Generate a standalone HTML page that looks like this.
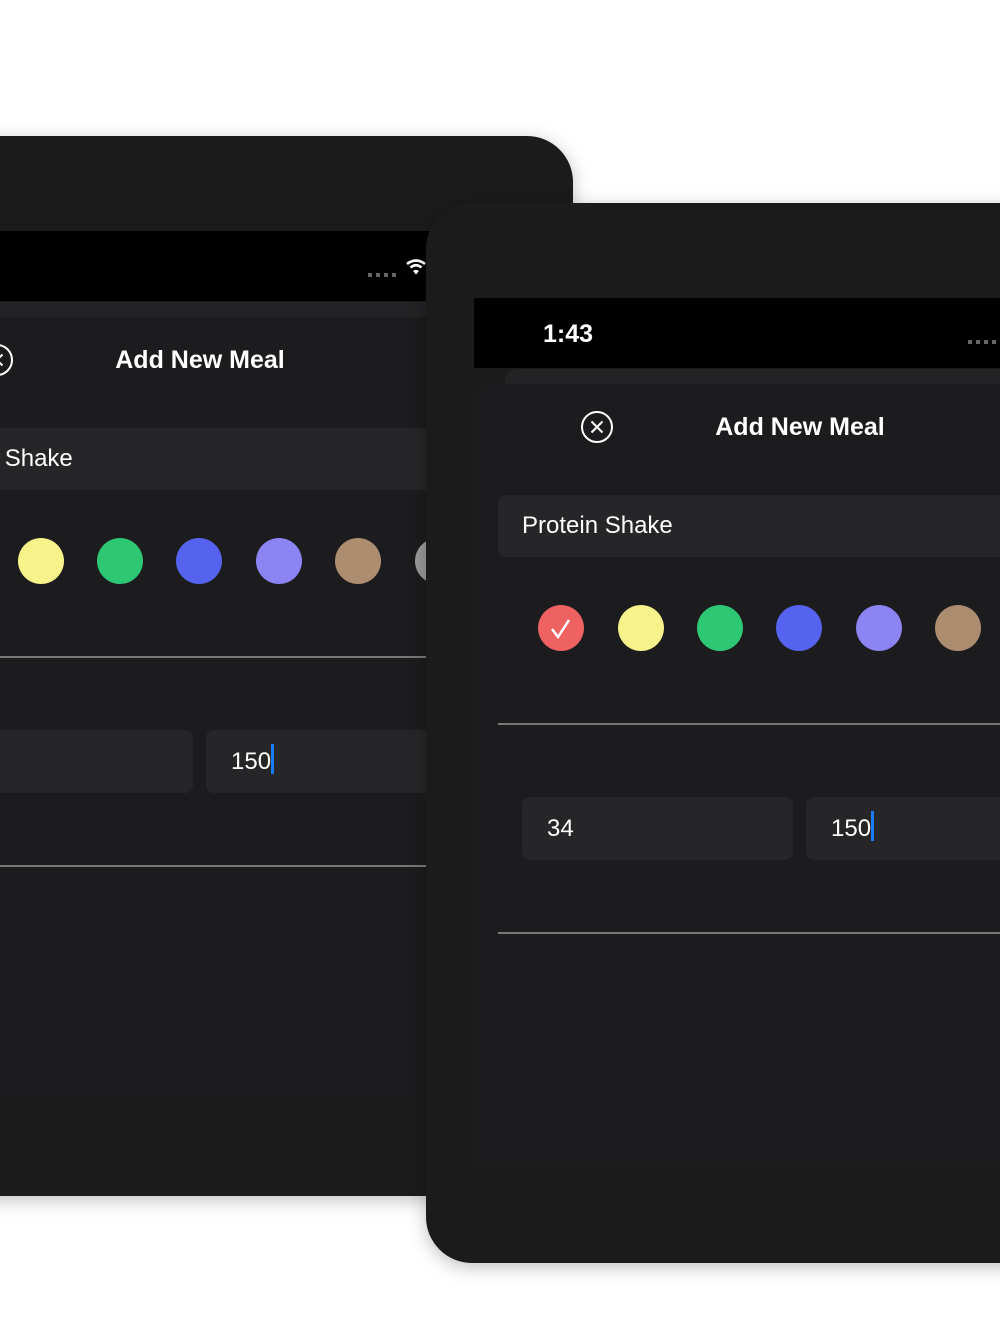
<!DOCTYPE html>
<html><head><meta charset="utf-8"><style>
html,body{margin:0;padding:0;background:#fff;width:1000px;height:1334px;overflow:hidden;font-family:"Liberation Sans",sans-serif}
#wrap{position:relative;width:1000px;height:1334px;overflow:hidden}
.dev{position:absolute;width:747px;height:1060px;background:#1b1b1b;border-radius:46px;box-shadow:0 4px 18px rgba(0,0,0,.25);overflow:hidden}
.sb{position:absolute;left:48px;top:95px;width:651px;height:70px;background:#000}
.time{position:absolute;left:117px;top:117px;color:#fff;font-size:25px;font-weight:bold}
.dots{position:absolute;left:542px;top:137px;width:30px;height:4px;background:repeating-linear-gradient(90deg,#666 0 4px,transparent 4px 8px)}
.card2{position:absolute;left:79px;top:166px;width:700px;height:40px;background:#232325;border-radius:12px}
.sheet{position:absolute;left:48px;top:181px;width:651px;height:782px;background:#1c1c1e;border-radius:12px 12px 0 0}
.title{position:absolute;left:174px;width:400px;top:209px;text-align:center;color:#fff;font-size:25px;font-weight:bold;line-height:30px}
.close{position:absolute;left:153px;top:207px}
.field{position:absolute;left:72px;top:292px;width:620px;height:62px;background:#262628;border-radius:8px;color:#fff;font-size:24px;line-height:62px;padding-left:24px;box-sizing:border-box}
.c{position:absolute;top:402px;width:46px;height:46px;border-radius:50%}
.line{position:absolute;left:72px;width:640px;height:2px;background:#777}
.inp{position:absolute;top:594px;height:63px;background:#262628;border-radius:8px;color:#fff;font-size:24px;line-height:63px;padding-left:25px;box-sizing:border-box}
.caret{display:inline-block;width:3px;height:30px;background:#1a7cf5;vertical-align:-5px}
</style></head><body><div id="wrap">

<div class="dev" style="left:-174px;top:136px">
<div class="sb"></div>
<div class="dots"></div>
<svg style="position:absolute;left:580px;top:122px" width="20" height="18" viewBox="0 0 20 18"><path d="M1 6Q10 -1 19 6" stroke="#fff" stroke-width="2.6" fill="none"/><path d="M4.5 9.5Q10 5 15.5 9.5" stroke="#fff" stroke-width="2.6" fill="none"/><path d="M7 13L10 16.5L13 13Q10 10.5 7 13Z" fill="#fff"/></svg>
<div class="card2"></div>
<div class="sheet"></div>
<div class="title">Add New Meal</div>
<svg class="close" width="36" height="36" viewBox="0 0 36 36"><circle cx="18" cy="17" r="15" stroke="#fff" stroke-width="2" fill="none"/><path d="M12.5 11.5L23.5 22.5M23.5 11.5L12.5 22.5" stroke="#fff" stroke-width="2"/></svg>
<div class="field">Protein Shake</div>
<div class="c" style="left:112px;background:#ef6262"></div>
<div class="c" style="left:192px;background:#f7f28a"></div>
<div class="c" style="left:271px;background:#2ec874"></div>
<div class="c" style="left:350px;background:#5563ee"></div>
<div class="c" style="left:430px;background:#8d84f4"></div>
<div class="c" style="left:509px;background:#ad8d70"></div>
<div class="c" style="left:589px;background:#999"></div>
<div class="line" style="top:520px"></div>
<div class="inp" style="left:96px;width:271px">34</div>
<div class="inp" style="left:380px;width:320px">150<span class="caret"></span></div>
<div class="line" style="top:729px"></div>
</div>

<div class="dev" style="left:426px;top:203px">
<div class="sb"></div>
<div class="time">1:43</div>
<div class="dots"></div>
<div class="card2"></div>
<div class="sheet"></div>
<div class="title">Add New Meal</div>
<svg class="close" width="36" height="36" viewBox="0 0 36 36"><circle cx="18" cy="17" r="15" stroke="#fff" stroke-width="2" fill="none"/><path d="M12.5 11.5L23.5 22.5M23.5 11.5L12.5 22.5" stroke="#fff" stroke-width="2"/></svg>
<div class="field">Protein Shake</div>
<div class="c" style="left:112px;background:#ef6262"><svg width="46" height="46" viewBox="0 0 46 46"><path d="M14 24L20 32L31 15" stroke="#fff" stroke-width="2.5" fill="none"/></svg></div>
<div class="c" style="left:192px;background:#f7f28a"></div>
<div class="c" style="left:271px;background:#2ec874"></div>
<div class="c" style="left:350px;background:#5563ee"></div>
<div class="c" style="left:430px;background:#8d84f4"></div>
<div class="c" style="left:509px;background:#ad8d70"></div>
<div class="c" style="left:589px;background:#999"></div>
<div class="line" style="top:520px"></div>
<div class="inp" style="left:96px;width:271px">34</div>
<div class="inp" style="left:380px;width:320px">150<span class="caret"></span></div>
<div class="line" style="top:729px"></div>
</div>
</div></body></html>
